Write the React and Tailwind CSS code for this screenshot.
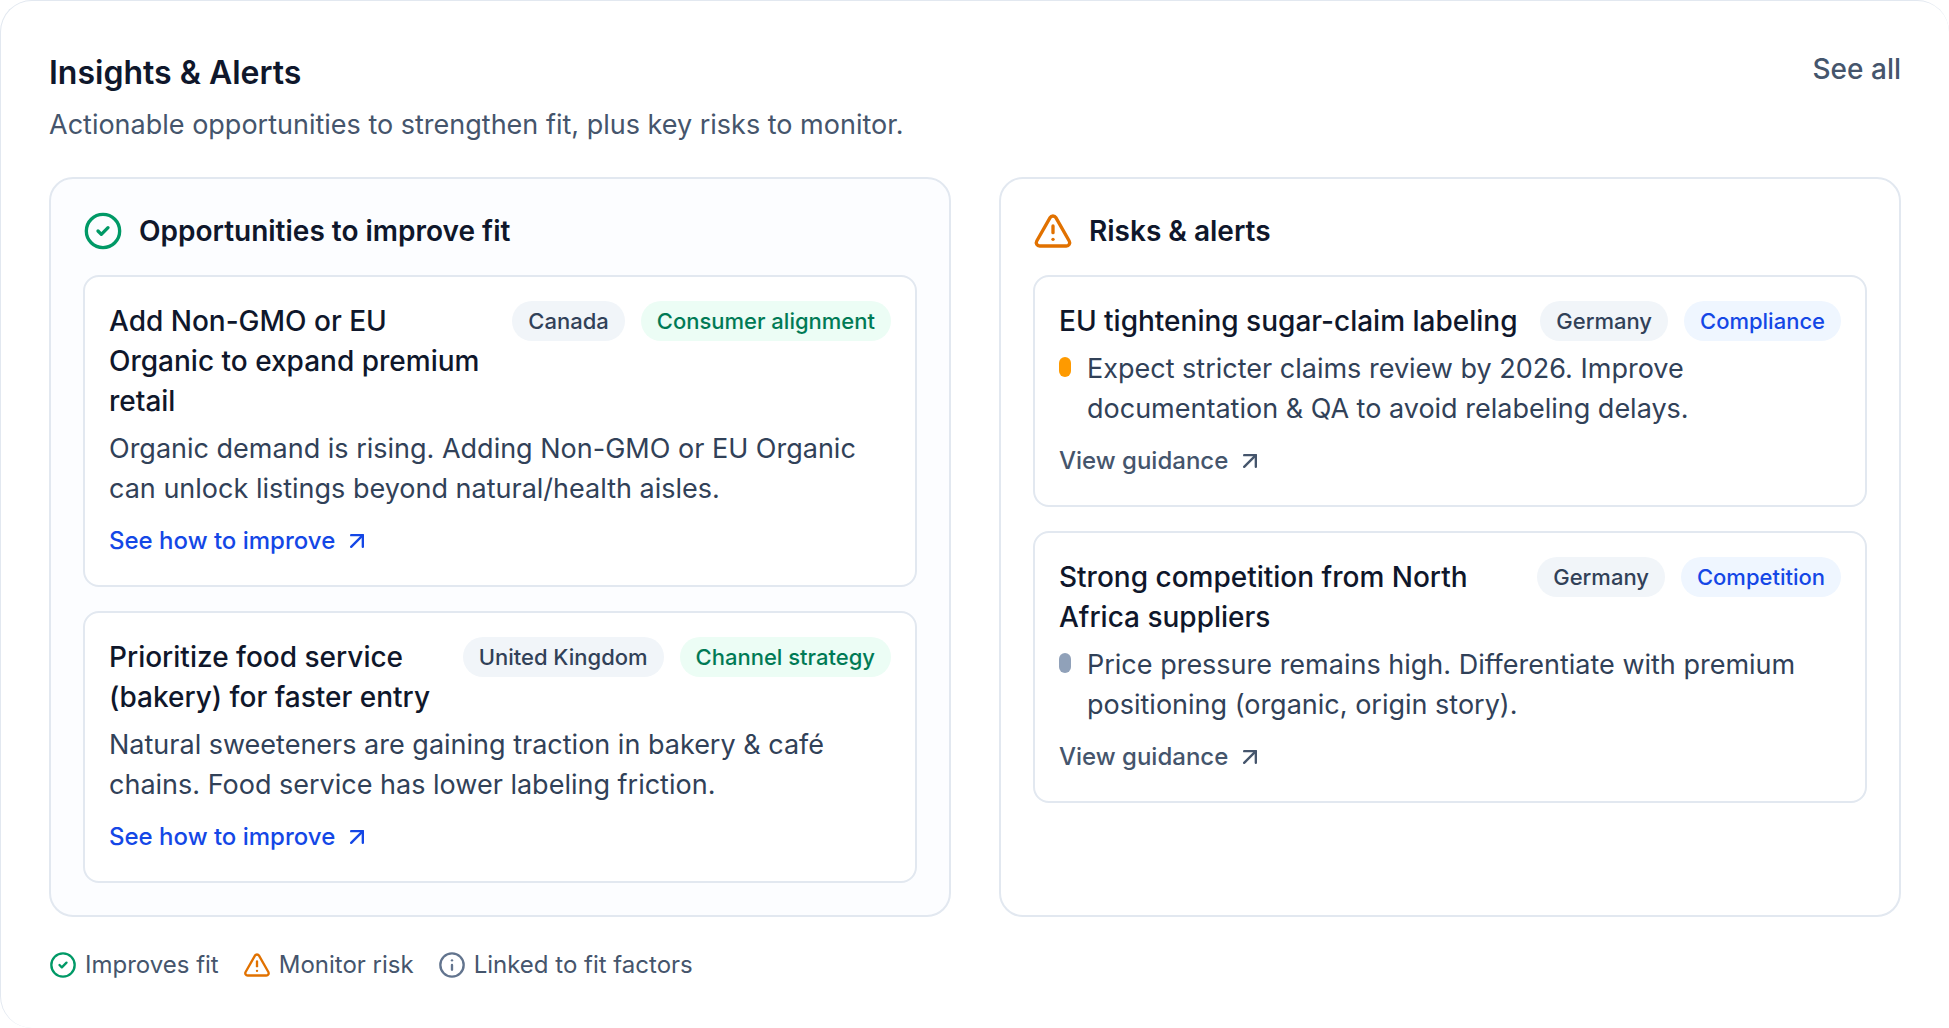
import { ArrowUpRight, CircleCheck, Info, TriangleAlert } from "lucide-react";

const opportunities = [
  {
    title: "Add Non-GMO or EU Organic to expand premium retail",
    country: "Canada",
    tag: "Consumer alignment",
    body: "Organic demand is rising. Adding Non-GMO or EU Organic can unlock listings beyond natural/health aisles.",
  },
  {
    title: "Prioritize food service (bakery) for faster entry",
    country: "United Kingdom",
    tag: "Channel strategy",
    body: "Natural sweeteners are gaining traction in bakery & café chains. Food service has lower labeling friction.",
  },
];

const risks = [
  {
    title: "EU tightening sugar-claim labeling",
    country: "Germany",
    tag: "Compliance",
    dot: "bg-[#fe9a00]",
    body: "Expect stricter claims review by 2026. Improve documentation & QA to avoid relabeling delays.",
  },
  {
    title: "Strong competition from North Africa suppliers",
    country: "Germany",
    tag: "Competition",
    dot: "bg-[#90a1b9]",
    body: "Price pressure remains high. Differentiate with premium positioning (organic, origin story).",
  },
];

function Badge({ tone, children }) {
  return (
    <span className={`rounded-full px-4 text-[22px] leading-10 font-medium whitespace-nowrap ${tone}`}>
      {children}
    </span>
  );
}

function InsightCard({ item, tagTone, linkTone, linkLabel }) {
  return (
    <article className="rounded-2xl border-2 border-slate-200 bg-white px-6 pt-6 pb-7">
      <div className="flex items-start justify-between gap-5">
        <h3 className="text-[28px] leading-10 font-medium text-slate-900">{item.title}</h3>
        <div className="flex shrink-0 gap-4">
          <Badge tone="bg-slate-100 text-slate-700">{item.country}</Badge>
          <Badge tone={tagTone}>{item.tag}</Badge>
        </div>
      </div>
      <div className="mt-2 flex items-start gap-4">
        {item.dot && <span className={`mt-2 h-5 w-3 shrink-0 rounded-full ${item.dot}`} />}
        <p className="text-[27px] leading-10 text-slate-700">{item.body}</p>
      </div>
      <a
        href="#guidance"
        className={`mt-4 flex w-fit items-center gap-2 text-2xl leading-8 font-medium ${linkTone}`}
      >
        {linkLabel}
        <ArrowUpRight className="size-7" />
      </a>
    </article>
  );
}

function Panel({ icon, title, className, children }) {
  return (
    <section className={`rounded-3xl border-2 border-slate-200 p-8 ${className}`}>
      <div className="flex items-center gap-4">
        {icon}
        <h2 className="text-[28px] leading-10 font-semibold text-slate-900">{title}</h2>
      </div>
      <div className="mt-6 flex flex-col gap-6">{children}</div>
    </section>
  );
}

export default function App() {
  return (
    <main className="rounded-[32px] border-t border-l border-slate-200 bg-white px-12 pt-12 pb-[47px] font-[Inter,sans-serif]">
      <header className="flex items-start justify-between">
        <div>
          <h1 className="text-[32px] leading-12 font-semibold text-slate-900">Insights &amp; Alerts</h1>
          <p className="mt-2 text-[27px] leading-10 text-slate-600">
            Actionable opportunities to strengthen fit, plus key risks to monitor.
          </p>
        </div>
        <button type="button" className="text-[28px] leading-10 font-medium text-slate-600">
          See all
        </button>
      </header>

      <div className="mt-8 grid grid-cols-2 gap-12">
        <Panel
          title="Opportunities to improve fit"
          className="bg-[#fcfdff]"
          icon={<CircleCheck className="size-10 text-emerald-600" />}
        >
          {opportunities.map((item) => (
            <InsightCard
              key={item.title}
              item={item}
              tagTone="bg-emerald-50 text-emerald-700"
              linkTone="text-blue-700"
              linkLabel="See how to improve"
            />
          ))}
        </Panel>
        <Panel
          title="Risks & alerts"
          className="bg-white"
          icon={<TriangleAlert className="size-10 text-amber-600" />}
        >
          {risks.map((item) => (
            <InsightCard
              key={item.title}
              item={item}
              tagTone="bg-blue-50 text-blue-700"
              linkTone="text-slate-600"
              linkLabel="View guidance"
            />
          ))}
        </Panel>
      </div>

      <footer className="mt-8 flex items-center gap-6 text-2xl leading-8 text-slate-600">
        <span className="flex items-center gap-2">
          <CircleCheck className="size-7 text-emerald-600" />
          Improves fit
        </span>
        <span className="flex items-center gap-2">
          <TriangleAlert className="size-7 text-amber-600" />
          Monitor risk
        </span>
        <span className="flex items-center gap-2">
          <Info className="size-7 text-slate-500" />
          Linked to fit factors
        </span>
      </footer>
    </main>
  );
}
